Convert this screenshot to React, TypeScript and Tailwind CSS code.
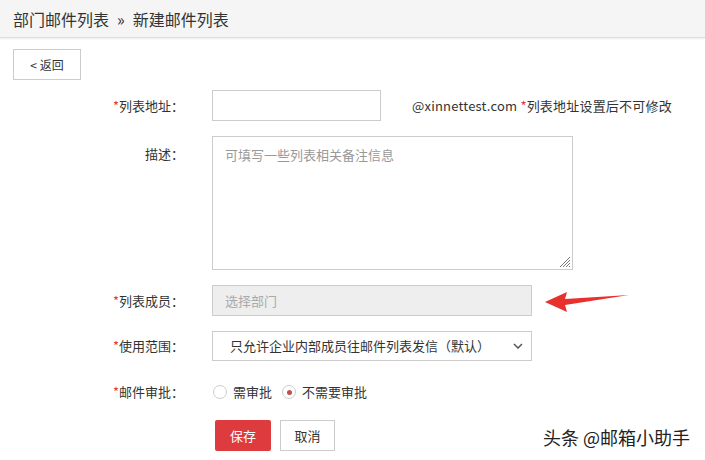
import React from "react";

const font = { fontFamily: '"Noto Sans CJK SC", "Liberation Sans", sans-serif' };

function Label({ text, required }: { text: string; required?: boolean }) {
  return (
    <div className="w-[184px] shrink-0 text-right text-[13px] text-[#333] pr-0">
      {required && <span className="text-[#e53935]">*</span>}
      {text}：
    </div>
  );
}

function Radio({ checked, label }: { checked?: boolean; label: string }) {
  return (
    <span className="flex items-center gap-[6px] text-[13px] text-[#333]">
      <span className="w-[14px] h-[14px] rounded-full border border-[#ccc] bg-white flex items-center justify-center">
        {checked && <span className="w-[5px] h-[5px] rounded-full bg-[#c0504d]" />}
      </span>
      {label}
    </span>
  );
}

export default function App() {
  return (
    <div className="w-[705px] h-[460px] bg-white relative overflow-hidden" style={font}>
      <div className="h-[38px] bg-[#f5f5f5] border-b border-[#ddd] shadow-[0_1px_2px_rgba(0,0,0,0.08)] flex items-center pl-[13px] text-[16px] text-[#333]">
        部门邮件列表 <span className="mx-[8px]">»</span> 新建邮件列表
      </div>

      <div className="pl-[13px] pt-[11px]">
        <button className="w-[68px] h-[31px] border border-[#ccc] bg-white text-[12px] text-[#333]">
          &lt; 返回
        </button>
      </div>

      <div className="flex flex-col mt-[10px]">
        <div className="flex items-center h-[31px]">
          <Label text="列表地址" required />
          <div className="ml-[28px] w-[169px] h-[31px] border border-[#ccc]" />
          <div className="ml-[31px] text-[13px] tracking-[0.2px] text-[#333]">
            @xinnettest.com <span className="text-[#e53935]">*</span>列表地址设置后不可修改
          </div>
        </div>

        <div className="flex items-start mt-[15px]">
          <div className="pt-[8px]">
            <Label text="描述" />
          </div>
          <div className="ml-[28px] w-[361px] h-[134px] border border-[#ccc] relative px-[12px] pt-[8px] text-[13px] text-[#999]">
            可填写一些列表相关备注信息
            <svg className="absolute right-[1px] bottom-[1px]" width="14" height="14" viewBox="0 0 14 14">
              <path d="M13 3L3 13M13 6L6 13M13 9L9 13M13 12L12 13" stroke="#777" strokeWidth="1" />
            </svg>
          </div>
        </div>

        <div className="flex items-center mt-[15px] h-[31px]">
          <Label text="列表成员" required />
          <div className="ml-[28px] w-[320px] h-[31px] border border-[#ccc] bg-[#eeeeee] flex items-center px-[12px] text-[13px] text-[#aaa]">
            选择部门
          </div>
          <svg className="ml-[13px]" width="86" height="24" viewBox="0 0 86 24">
            <path d="M0 13L22 3L20 10L84 6L20 16L22 23Z" fill="#e8302c" />
          </svg>
        </div>

        <div className="flex items-center mt-[15px] h-[30px]">
          <Label text="使用范围" required />
          <div className="ml-[28px] w-[320px] h-[30px] border border-[#ccc] flex items-center justify-between pl-[17px] pr-[8px] text-[13px] text-[#333]">
            只允许企业内部成员往邮件列表发信（默认）
            <svg width="10" height="6" viewBox="0 0 10 6">
              <path d="M1 1L5 5L9 1" stroke="#555" strokeWidth="1.5" fill="none" />
            </svg>
          </div>
        </div>

        <div className="flex items-center mt-[16px] h-[30px]">
          <Label text="邮件审批" required />
          <div className="ml-[29px] flex items-center gap-[10px]">
            <Radio label="需审批" />
            <Radio checked label="不需要审批" />
          </div>
        </div>

        <div className="flex items-center mt-[13px] ml-[215px] gap-[9px]">
          <button className="w-[56px] h-[31px] bg-[#dd3b3e] text-white text-[13px] rounded-[2px]">保存</button>
          <button className="w-[55px] h-[31px] border border-[#ccc] bg-white text-[13px] text-[#333]">取消</button>
        </div>
      </div>

      <div className="absolute left-[543px] top-[424px] text-[18px] text-[#222] [text-shadow:0_0_3px_#fff]">
        头条 @邮箱小助手
      </div>
    </div>
  );
}
